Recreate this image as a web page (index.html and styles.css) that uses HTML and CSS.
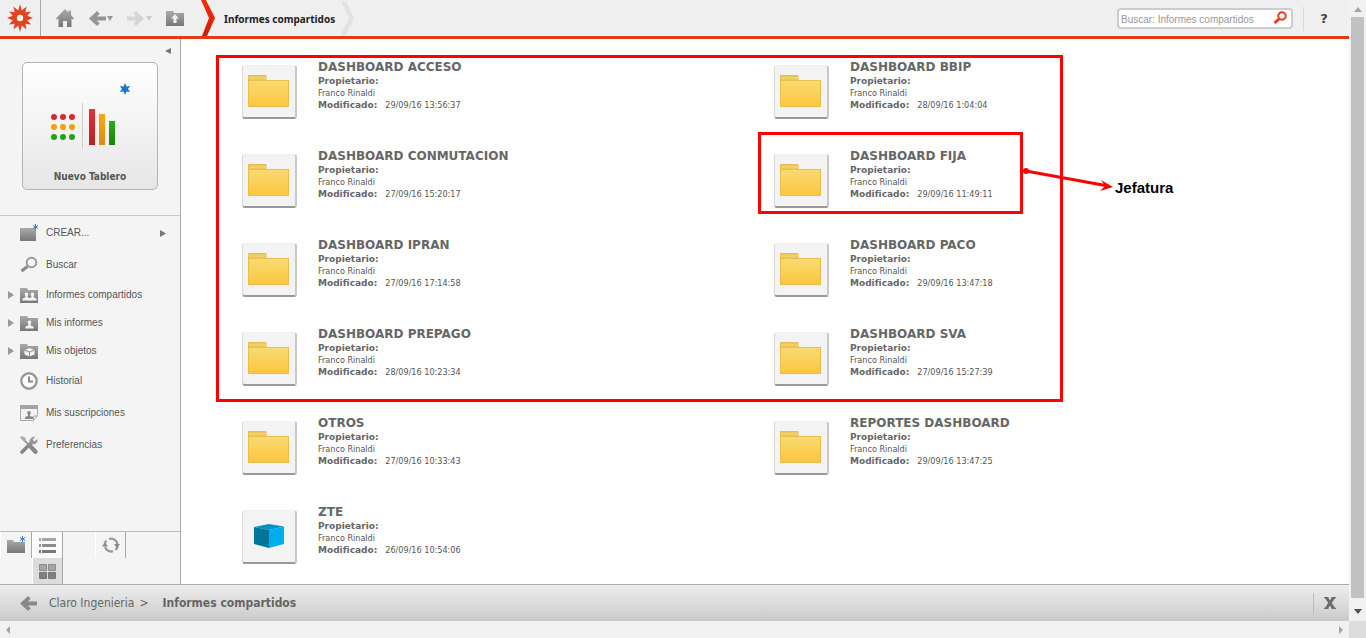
FILE: index.html
```html
<!DOCTYPE html>
<html lang="es">
<head>
<meta charset="utf-8">
<title>Informes compartidos</title>
<link rel="stylesheet" href="styles.css">
</head>
<body>
<svg class="defs" aria-hidden="true">
  <defs>
    <linearGradient id="gray" x1="0" y1="0" x2="0" y2="1"><stop offset="0" stop-color="#aaa"/><stop offset="1" stop-color="#777"/></linearGradient>
    <linearGradient id="gold" x1="0" y1="0" x2="0" y2="1"><stop offset="0" stop-color="#f8db70"/><stop offset="1" stop-color="#fdc540"/></linearGradient>
    <linearGradient id="red" x1="0" y1="0" x2="0" y2="1"><stop offset="0" stop-color="#e83236"/><stop offset="1" stop-color="#b02226"/></linearGradient>
    <linearGradient id="amber" x1="0" y1="0" x2="0" y2="1"><stop offset="0" stop-color="#fba90a"/><stop offset="1" stop-color="#d2901a"/></linearGradient>
    <linearGradient id="green" x1="0" y1="0" x2="0" y2="1"><stop offset="0" stop-color="#22b014"/><stop offset="1" stop-color="#1b8312"/></linearGradient>
    <linearGradient id="flame" x1="0" y1="0" x2="0" y2="1"><stop offset="0" stop-color="#fb2d0b"/><stop offset="1" stop-color="#cf1d06"/></linearGradient>
    <symbol id="folder" viewBox="0 0 42 34">
      <path d="M.5 5.500v-5h17.500v5z" fill="#edc65a" stroke="#e5bd55"/>
      <path d="M1 3h17" stroke="#f6d878"/>
      <rect x=".5" y="5.500" width="40" height="26" fill="url(#gold)" stroke="#ebbd4c"/>
    </symbol>
    <symbol id="tab" viewBox="0 0 18 16"><path d="M0 1h7l1 2h10v13H0z" fill="url(#gray)"/></symbol>
    <symbol id="person" viewBox="0 0 10 9"><path d="M5 0c1.400 0 2 .900 2 2 0 1-.4 1.600-.8 2v1.400L9.600 7v2H.4V7l3.400-1.600V4C3.400 3.600 3 3 3 2c0-1.100.6-2 2-2z" fill="#f4f4f4"/></symbol>
    <symbol id="back" viewBox="0 0 19 18"><path d="M11 2.500L4 9l7 6.500M4 9h15" fill="none" stroke="currentColor" stroke-width="4"/></symbol>
    <symbol id="spark" viewBox="0 0 12 12"><path d="M6 0l1.500 3.400 3.700-.4L9 6l2.200 3-3.700-.4L6 12l-1.500-3.400L.8 9 3 6 .8 3l3.700.4z" fill="#1d74d0"/></symbol>
  </defs>
</svg>
<div class="window">
  <div class="app">
    <header class="topbar">
      <a class="logo" href="#" aria-label="MicroStrategy">
        <svg width="26" height="28" viewBox="-13 -14 26 28"><path d="M0-14L1.800-7.500 6.500-11.500 5.300-5.700 11-6.500 7.300-2.200 13 0 7.300 2.200 11 6.500 5.300 5.700 6.500 11.500 1.800 7.500 0 14-1.800 7.500-6.500 11.500-5.300 5.700-11 6.500-7.300 2.200-13 0-7.300-2.200-11-6.500-5.300-5.700-6.500-11.500-1.800-7.500z" fill="#e2431f"/><circle r="3.200" fill="#f0f0f0"/></svg>
      </a>
      <nav class="tools" aria-label="Principal">
        <button aria-label="Inicio"><svg width="18" height="18" viewBox="0 0 18 18"><path d="M9 0l3.500 3.500V1.500H15V6l3 3.500-1 1-1.500-1V18h-4.500v-6H7v6H2.500V9.500l-1.500 1-1-1z" fill="url(#gray)"/></svg></button>
        <button class="split" aria-label="Atrás"><svg width="18" height="17"><use href="#back"/></svg><svg width="6" height="5"><path d="M0 0h6L3 5z" fill="#999"/></svg></button>
        <button class="split off" aria-label="Adelante"><svg class="flip" width="18" height="17"><use href="#back"/></svg><svg width="6" height="5"><path d="M0 0h6L3 5z" fill="#ccc"/></svg></button>
        <button aria-label="Subir"><svg width="18" height="16" viewBox="0 0 18 16"><use href="#tab" width="18" height="16"/><path d="M9 4l4 4.500h-2.500V13h-3V8.500H5z" fill="#efefef"/></svg></button>
      </nav>
      <svg class="chevron" width="14" height="36"><path d="M0 0h5l9 18-8 18H1l7-18z" fill="url(#flame)"/></svg>
      <h1>Informes compartidos</h1>
      <svg class="chevron end" width="14" height="34"><path d="M0 0h5l8 17-8 17H0l8-17z" fill="#e2e2e2"/></svg>
      <form class="search">
        <input type="text" aria-label="Buscar" placeholder="Buscar: Informes compartidos">
        <button type="button" aria-label="Buscar"><svg width="14" height="14"><circle cx="9" cy="5" r="3.700" fill="none" stroke="#f03318" stroke-width="2"/><path d="M1.500 12L6 8" stroke="#f03318" stroke-width="3"/></svg></button>
      </form>
      <button class="help" aria-label="Ayuda">?</button>
    </header>
    <div class="middle">
      <aside class="sidebar">
        <button class="collapse" aria-label="Contraer"><svg width="6" height="6"><path d="M6 0v6L0 3z" fill="#777"/></svg></button>
        <button class="board">
          <svg width="80" height="68" viewBox="0 0 80 68">
            <g fill="#d9292f"><circle cx="4" cy="36" r="3"/><circle cx="13" cy="36" r="3"/><circle cx="22" cy="36" r="3"/></g>
            <g fill="#f2a00c"><circle cx="4" cy="46" r="3"/><circle cx="13" cy="46" r="3"/><circle cx="22" cy="46" r="3"/></g>
            <g fill="#1fa514"><circle cx="4" cy="56" r="3"/><circle cx="13" cy="56" r="3"/><circle cx="22" cy="56" r="3"/></g>
            <path d="M32.500 22v46" stroke="#ccc"/>
            <path d="M39 28h6v36h-6z" fill="url(#red)"/><path d="M49 33h6v31h-6z" fill="url(#amber)"/><path d="M59 40h6v24h-6z" fill="url(#green)"/>
            <use href="#spark" x="69" y="2" width="12" height="12"/>
          </svg>
          <span>Nuevo Tablero</span>
        </button>
        <nav class="menu" aria-label="Secciones">
          <a href="#"><i></i><svg class="ico" width="19" height="18"><path d="M0 4h16v13H0z" fill="url(#gray)"/><path d="M15.500 0v6M13 1.500l5 3M13 4.500l5-3" stroke="#2f7fd8"/></svg><span>CREAR...</span><svg class="more" width="6" height="7"><path d="M0 0l6 3.500L0 7z" fill="#777"/></svg></a>
          <a href="#"><i></i><svg class="ico" width="19" height="18"><circle cx="11.500" cy="6.500" r="4.800" fill="none" stroke="#999" stroke-width="2"/><path d="M1.500 15L7.500 10.500" stroke="#888" stroke-width="3"/></svg><span>Buscar</span></a>
          <a class="tight" href="#"><i><svg width="6" height="8"><path d="M0 0l6 4-6 4z" fill="#999"/></svg></i><svg class="ico" width="19" height="18"><use href="#tab" y="1" width="18" height="16"/><use href="#person" x="8" y="6" width="9" height="9"/><use href="#person" x="2" y="6" width="9" height="9"/></svg><span>Informes compartidos</span></a>
          <a class="tight" href="#"><i><svg width="6" height="8"><path d="M0 0l6 4-6 4z" fill="#999"/></svg></i><svg class="ico" width="19" height="18"><use href="#tab" y="1" width="18" height="16"/><use href="#person" x="5" y="6" width="9" height="9"/></svg><span>Mis informes</span></a>
          <a class="tight" href="#"><i><svg width="6" height="8"><path d="M0 0l6 4-6 4z" fill="#999"/></svg></i><svg class="ico" width="19" height="18"><use href="#tab" y="1" width="18" height="16"/><path d="M9.500 6l5 2v4.500l-5 2-5-2V8z" fill="#f4f4f4"/><path d="M4.500 8l5 2 5-2M9.500 10v4.500" fill="none" stroke="#888"/></svg><span>Mis objetos</span></a>
          <a href="#"><i></i><svg class="ico" width="19" height="18"><circle cx="9" cy="9" r="7.700" fill="#fff" stroke="#999" stroke-width="2.400"/><path d="M9 4.500V9.500h4" fill="none" stroke="#888" stroke-width="2"/></svg><span>Historial</span></a>
          <a href="#"><i></i><svg class="ico" width="19" height="18"><path d="M.5 1.500h17v10l-4 5H.5z" fill="#f4f4f4" stroke="#aaa"/><path d="M0 1h18v4H0z" fill="#a3a3a3"/><path d="M9 7c1.300 0 1.800 1 1.800 2l-.8 2v1l3 1v2H5v-2l3-1v-1l-.8-2c0-1 .5-2 1.800-2z" fill="#888"/><path d="M13.500 16v-4h4" fill="none" stroke="#aaa"/></svg><span>Mis suscripciones</span></a>
          <a href="#"><i></i><svg class="ico" width="19" height="18"><path d="M2 16l9-9" stroke="#888" stroke-width="3.600" stroke-linecap="round"/><path d="M15.500.8l-2.800 2.800 1.500 1.800 3.300-2.500c.5 4-2.600 6.400-6 5L9.500 6.500C9 3 12 .2 15.500.8z" fill="#999"/><path d="M2 2l9 9" stroke="#999" stroke-width="1.800"/><path d="M0 1.500L2 0l3.500 2L6 5 4 5.500z" fill="#aaa"/><path d="M11 11l4.500 4.800" stroke="#888" stroke-width="4.200" stroke-linecap="round"/></svg><span>Preferencias</span></a>
        </nav>
        <div class="modes">
          <div class="pane"><button aria-label="Crear"><svg width="19" height="18"><path d="M0 4h6l1 2h11v11H0z" fill="url(#gray)"/><path d="M15.500 0v6M13 1.500l5 3M13 4.500l5-3" stroke="#2f7fd8"/></svg></button></div>
          <div class="pane views"><button aria-label="Lista"><svg width="17" height="15"><path d="M0 0h2v3H0zM3 0h14v3H3z" fill="#a5a5a5"/><path d="M0 6h2v3H0zM3 6h14v3H3z" fill="#8c8c8c"/><path d="M0 12h2v3H0zM3 12h14v3H3z" fill="#787878"/></svg></button><button class="on" aria-label="Iconos"><svg width="17" height="15"><path d="M.5.500h7v6h-7zM9.500.500h7v6h-7z" fill="#a5a5a5" stroke="#8c8c8c"/><path d="M.5 8.500h7v6h-7zM9.500 8.500h7v6h-7z" fill="#808080" stroke="#787878"/></svg></button></div>
          <div class="pane last"><button aria-label="Actualizar"><svg width="18" height="16"><path d="M2.500 8.500a6.500 6.500 0 0 1 2-5M7 2a6.500 6.500 0 0 1 8.500 6M15.500 9a6.500 6.500 0 0 1-2 4M11 14.200A6.500 6.500 0 0 1 3 10" fill="none" stroke="#999" stroke-width="2.300"/><path d="M12 7h6l-3 4zM0 9.500h6L3 5.500z" fill="#888"/></svg></button></div>
        </div>
      </aside>
      <main class="content">
        <ul class="items">
          <li><span class="tile"><svg width="42" height="34"><use href="#folder"/></svg></span><div><a href="#">DASHBOARD ACCESO</a><b>Propietario:</b><span>Franco Rinaldi</span><p><b>Modificado:</b><time>29/09/16 13:56:37</time></p></div></li>
          <li><span class="tile"><svg width="42" height="34"><use href="#folder"/></svg></span><div><a href="#">DASHBOARD BBIP</a><b>Propietario:</b><span>Franco Rinaldi</span><p><b>Modificado:</b><time>28/09/16 1:04:04</time></p></div></li>
          <li><span class="tile"><svg width="42" height="34"><use href="#folder"/></svg></span><div><a href="#">DASHBOARD CONMUTACION</a><b>Propietario:</b><span>Franco Rinaldi</span><p><b>Modificado:</b><time>27/09/16 15:20:17</time></p></div></li>
          <li><span class="tile"><svg width="42" height="34"><use href="#folder"/></svg></span><div><a href="#">DASHBOARD FIJA</a><b>Propietario:</b><span>Franco Rinaldi</span><p><b>Modificado:</b><time>29/09/16 11:49:11</time></p></div></li>
          <li><span class="tile"><svg width="42" height="34"><use href="#folder"/></svg></span><div><a href="#">DASHBOARD IPRAN</a><b>Propietario:</b><span>Franco Rinaldi</span><p><b>Modificado:</b><time>27/09/16 17:14:58</time></p></div></li>
          <li><span class="tile"><svg width="42" height="34"><use href="#folder"/></svg></span><div><a href="#">DASHBOARD PACO</a><b>Propietario:</b><span>Franco Rinaldi</span><p><b>Modificado:</b><time>29/09/16 13:47:18</time></p></div></li>
          <li><span class="tile"><svg width="42" height="34"><use href="#folder"/></svg></span><div><a href="#">DASHBOARD PREPAGO</a><b>Propietario:</b><span>Franco Rinaldi</span><p><b>Modificado:</b><time>28/09/16 10:23:34</time></p></div></li>
          <li><span class="tile"><svg width="42" height="34"><use href="#folder"/></svg></span><div><a href="#">DASHBOARD SVA</a><b>Propietario:</b><span>Franco Rinaldi</span><p><b>Modificado:</b><time>27/09/16 15:27:39</time></p></div></li>
          <li><span class="tile"><svg width="42" height="34"><use href="#folder"/></svg></span><div><a href="#">OTROS</a><b>Propietario:</b><span>Franco Rinaldi</span><p><b>Modificado:</b><time>27/09/16 10:33:43</time></p></div></li>
          <li><span class="tile"><svg width="42" height="34"><use href="#folder"/></svg></span><div><a href="#">REPORTES DASHBOARD</a><b>Propietario:</b><span>Franco Rinaldi</span><p><b>Modificado:</b><time>29/09/16 13:47:25</time></p></div></li>
          <li><span class="tile"><svg width="42" height="34" viewBox="0 0 42 34"><path d="M6 7l15-3 15 2.500L21 10z" fill="#0092c0"/><path d="M6 7l15 3v18L6 24z" fill="#00759c"/><path d="M21 10l15-3.500V24l-15 4z" fill="#00adf0"/></svg></span><div><a href="#">ZTE</a><b>Propietario:</b><span>Franco Rinaldi</span><p><b>Modificado:</b><time>26/09/16 10:54:06</time></p></div></li>
        </ul>
        <div class="mark all"></div>
        <div class="mark one"></div>
        <svg class="arrow" width="92" height="24"><path d="M4 5l82 15" stroke="red" stroke-width="3"/><circle cx="4" cy="5" r="3" fill="red"/><path d="M79 14l12 7-13 4 5-5z" fill="red"/></svg>
        <strong class="note">Jefatura</strong>
      </main>
    </div>
    <footer class="path">
      <button aria-label="Atrás"><svg width="18" height="17"><use href="#back"/></svg></button>
      <a href="#">Claro Ingenieria</a><span class="gt">&gt;</span><strong>Informes compartidos</strong>
      <button class="close" aria-label="Cerrar"><svg width="12" height="12"><path d="M0 .5h4.500M7.500.500H12M0 11.500h4.500M7.500 11.500H12" stroke="#777" stroke-width="1.500"/><path d="M2 0l8 12M10 0L2 12" stroke="#6c6c6c" stroke-width="3"/></svg></button>
    </footer>
  </div>
  <div class="vscroll"><svg width="8" height="5"><path d="M0 5h8L4 0z" fill="#a3a3a3"/></svg><div class="thumb"></div><svg width="8" height="5"><path d="M0 0h8L4 5z" fill="#505050"/></svg></div>
  <div class="hscroll"><svg width="4" height="8"><path d="M4 0v8L0 4z" fill="#a3a3a3"/></svg><svg width="4" height="8"><path d="M0 0v8l4-4z" fill="#a3a3a3"/></svg></div>
  <div class="corner"></div>
</div>
</body>
</html>
```
FILE: styles.css
```css
* { box-sizing: border-box; }
body {
  margin: 0;
  font: 9px/12px "DejaVu Sans Condensed", "DejaVu Sans", sans-serif;
  color: #555;
  background: #fff;
}
.defs { position: absolute; width: 0; height: 0; }
svg { display: block; flex: none; }
button { display: flex; align-items: center; justify-content: center; padding: 0; border: 0; background: none; color: inherit; font: inherit; }
a { color: inherit; text-decoration: none; }

.window { display: grid; grid-template: 1fr 17px / 1fr 17px; min-height: 100vh; }
.app { display: flex; flex-direction: column; }

.topbar { display: flex; align-items: center; height: 39px; border-bottom: 3px solid #e03c1c; background: #efefef; }
.logo { display: flex; align-items: center; justify-content: center; width: 41px; height: 36px; border-right: 1px solid #a8a8a8; }
.tools { display: flex; align-items: center; gap: 14px; padding-left: 15px; color: #959595; }
.split { gap: 1px; }
.split.off { color: #d5d5d5; }
.flip { transform: scaleX(-1); }
.chevron { margin-left: 17px; }
.chevron.end { margin-left: 6px; }
h1 { margin: 2px 0 0 9px; color: #222; font: bold 10px/14px "Noto Sans", sans-serif; }
.search { display: flex; align-items: center; width: 176px; height: 21px; margin-left: auto; padding: 0 4px 0 2px; border: 2px solid #ccc; border-radius: 4px; background: #fff; }
.search input { flex: 1; min-width: 0; padding: 3px 0 0; border: 0; outline: 0; background: none; font: 10px/14px "Liberation Sans", sans-serif; }
.search input::placeholder { color: #999; opacity: 1; }
.help { width: 41px; height: 24px; margin: 2px 5px 0 10px; border-left: 1px solid #d8d8d8; color: #444; font: bold 13px/16px "DejaVu Sans", sans-serif; }

.middle { display: flex; flex: 1; }
.sidebar { display: flex; flex-direction: column; width: 181px; border-right: 1px solid #a8a8a8; background: #f4f4f4; }
.collapse { align-self: flex-end; width: 24px; height: 23px; }
.board { flex-direction: column; justify-content: flex-end; gap: 21px; width: 136px; height: 128px; margin: 0 22px 25px; padding-bottom: 5px; border: 1px solid #b5b5b5; border-radius: 5px; background: linear-gradient(#fff, #e6e6e6); font: bold 10px/14px "DejaVu Sans Condensed", sans-serif; }
.menu { padding-top: 1px; border-top: 1px solid #c8c8c8; font: 10px/14px "Liberation Sans", sans-serif; }
.menu a { display: flex; align-items: center; height: 32px; }
.menu a.tight { height: 28px; }
.menu i { width: 12px; margin-left: 8px; }
.ico { margin-right: 7px; }
.more { margin: 0 14px 0 auto; }
.modes { display: flex; align-items: flex-start; margin-top: auto; border-top: 1px solid #bbb; }
.pane { width: 32px; border-left: 1px solid #fff; border-right: 1px solid #a8a8a8; }
.pane button { width: 100%; height: 26px; }
.views { width: 31px; }
.views button { background: #fafafa; }
.views button.on { background: #dcdcdc; }
.last { margin-left: 32px; width: 31px; }

.content { position: relative; flex: 1; padding: 20px 43px 5px 61px; }
.items { display: grid; grid-template-columns: 1fr 1fr; row-gap: 25px; margin: 0; padding: 0; list-style: none; }
.items li { display: flex; gap: 21px; min-height: 64px; }
.tile { display: flex; align-items: center; justify-content: center; width: 55px; height: 54px; margin-top: 6px; border: 1px solid #d8d8d8; border-top-color: #f0f0f0; border-bottom: 2px solid #999; border-right: 2px solid #c8c8c8; border-radius: 3px; background: #f3f3f3; }
.items a, .items div > b, .items div > span { display: block; }
.items a, .items b { color: #666; }
.items a { font: bold 12px/16px "DejaVu Sans", sans-serif; }
.items b { font: bold 9px/12px "DejaVu Sans", sans-serif; }
.items p { display: flex; gap: 8px; margin: 0; }
.mark { position: absolute; border: 3px solid red; pointer-events: none; }
.all { left: 35px; top: 16px; width: 847px; height: 347px; }
.one { left: 577px; top: 93px; width: 265px; height: 82px; }
.arrow { position: absolute; left: 841px; top: 127px; overflow: visible; }
.note { position: absolute; left: 934px; top: 140px; color: #000; font: bold 15px/18px "Liberation Sans", sans-serif; }

.path { display: flex; align-items: center; height: 37px; padding-left: 19px; border-top: 1px solid #aaa; background: linear-gradient(#ededed, #cacaca); color: #666; font: 12px/16px "DejaVu Sans Condensed", sans-serif; }
.path button { color: #888; }
.path a { margin-left: 12px; }
.gt { margin: 0 14px 0 5px; }
.path .close { width: 32px; height: 20px; margin: 0 4px 0 auto; border-left: 1px solid #bbb; }

.vscroll { display: flex; flex-direction: column; align-items: center; padding: 7px 0; background: #f1f1f1; }
.thumb { flex: 1; width: 13px; margin: 5px 0 11px; background: #c1c1c1; }
.hscroll { display: flex; align-items: center; justify-content: space-between; padding: 0 6px; background: #f1f1f1; }
.corner { background: #dcdcdc; }
```
